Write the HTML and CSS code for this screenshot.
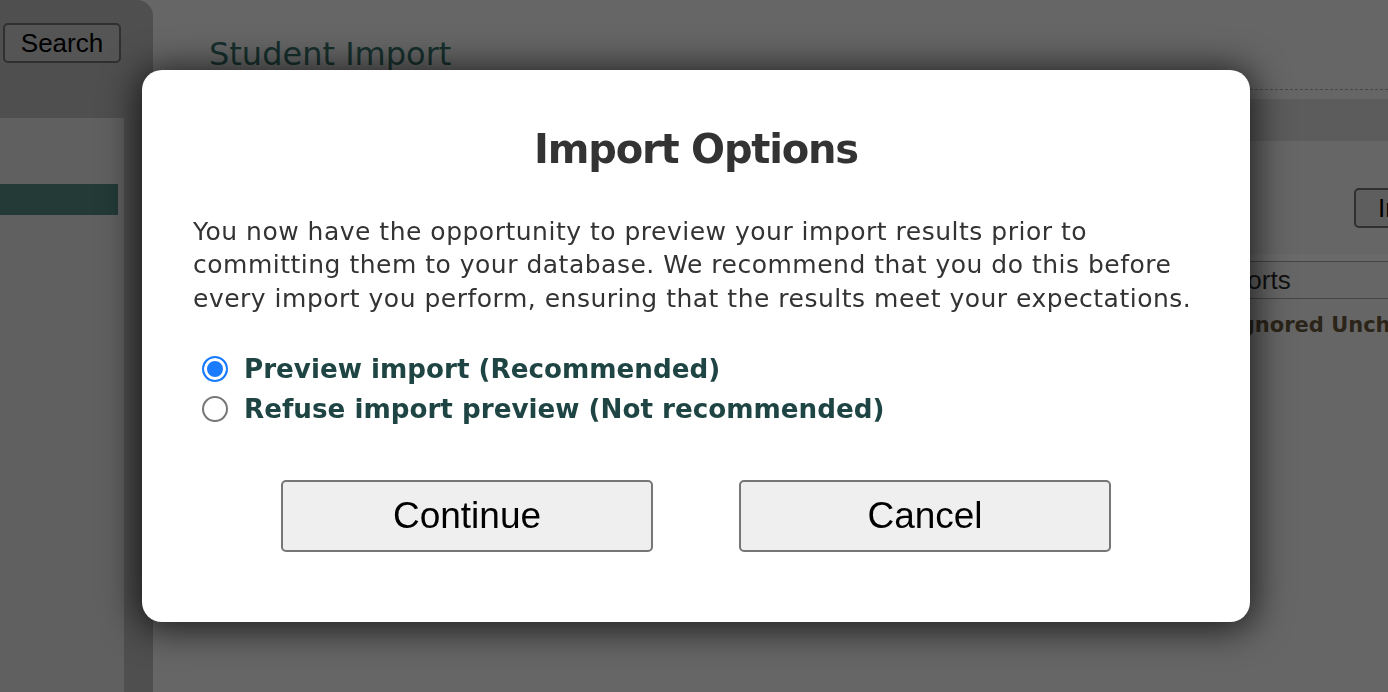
FILE: index.html
```html
<!DOCTYPE html>
<html lang="en">
<head>
<meta charset="utf-8">
<title>Student Import</title>
<link rel="stylesheet" href="styles.css">
</head>
<body>
<div class="page">
  <aside class="sidebar">
    <div class="sidebar-top">
      <button class="search-btn" type="button">Search</button>
    </div>
    <div class="sidebar-panel">
      <div class="nav-item active"></div>
    </div>
  </aside>
  <main class="main">
    <h1 class="page-title">Student Import</h1>
    <div class="toolbar-band"></div>
    <div class="actions">
      <button class="import-btn" type="button">Import</button>
    </div>
    <div class="results">
      <div class="results-row head">
        <span class="cell first"></span>
        <span class="cell second">Imports</span>
      </div>
      <div class="results-row">
        <span class="cell first"></span>
        <span class="cell second status">Ignored Unchanged</span>
      </div>
    </div>
  </main>
</div>

<div class="overlay">
  <div class="modal" role="dialog" aria-labelledby="modal-title">
    <h2 class="modal-title" id="modal-title">Import Options</h2>
    <p class="modal-text">You now have the opportunity to preview your import results prior to committing them to your database. We recommend that you do this before every import you perform, ensuring that the results meet your expectations.</p>
    <div class="options">
      <label class="option">
        <input type="radio" name="preview" class="radio" checked>
        <span>Preview import (Recommended)</span>
      </label>
      <label class="option">
        <input type="radio" name="preview" class="radio">
        <span>Refuse import preview (Not recommended)</span>
      </label>
    </div>
    <div class="modal-buttons">
      <button class="modal-btn" type="button">Continue</button>
      <button class="modal-btn" type="button">Cancel</button>
    </div>
  </div>
</div>
</body>
</html>
```

FILE: styles.css
```css
html, body {
  margin: 0;
  padding: 0;
  height: 100%;
  overflow: hidden;
}

body {
  background: #666666;
  font-family: "DejaVu Sans", Verdana, sans-serif;
}

.page {
  display: flex;
  height: 100vh;
}

/* ---------- sidebar ---------- */
.sidebar {
  flex: 0 0 153px;
  display: flex;
  flex-direction: column;
  background: #4f4f4f;
  border-top-right-radius: 16px;
}

.sidebar-top {
  height: 118px;
  box-sizing: border-box;
  padding: 23px 0 0 3px;
}

.search-btn {
  width: 118px;
  height: 40px;
  box-sizing: border-box;
  background: #555555;
  border: 2px solid #303030;
  border-radius: 5px;
  font-family: "Liberation Sans", Arial, sans-serif;
  font-size: 26px;
  color: #000;
  padding: 0;
}

.sidebar-panel {
  flex: 1;
  width: 124px;
  background: #606060;
  padding-top: 66px;
}

.nav-item {
  height: 31px;
  width: 118px;
}

.nav-item.active {
  background: #233a37;
}

/* ---------- main ---------- */
.main {
  flex: 1;
  min-width: 0;
  padding-left: 56px;
}

.page-title {
  margin: 35px 0 0;
  padding-bottom: 16px;
  border-bottom: 1px dashed #474747;
  font-size: 32px;
  line-height: 38px;
  font-weight: normal;
  color: #16302d;
}

.toolbar-band {
  margin-top: 9px;
  height: 42px;
  background: #5c5c5c;
}

.actions {
  margin-top: 47px;
  padding-left: 1145px;
  white-space: nowrap;
}

.import-btn {
  height: 40px;
  box-sizing: border-box;
  padding: 0 22px;
  background: #5e5e5e;
  border: 2px solid #303030;
  border-radius: 5px;
  font-family: "Liberation Sans", Arial, sans-serif;
  font-size: 26px;
  color: #000;
}

.results {
  margin-top: 26px;
  border-top: 7px solid #6a6a6a;
}

.results-row {
  display: grid;
  grid-template-columns: 992px 1fr;
  height: 36px;
  border-top: 1px solid #454545;
  white-space: nowrap;
  align-items: center;
}

.results-row.head {
  border-bottom: 1px solid #454545;
}

.cell.second {
  font-family: "Liberation Sans", Arial, sans-serif;
  font-size: 26px;
  color: #111;
  padding-left: 3px;
}

.results-row + .results-row {
  border-top: 0;
  height: 52px;
}

.cell.status {
  font-family: "DejaVu Sans", Verdana, sans-serif;
  font-weight: bold;
  font-size: 21px;
  color: #2b2418;
  padding-left: 31px;
}

/* ---------- modal ---------- */
.overlay {
  position: fixed;
  inset: 0;
  display: flex;
  align-items: center;
  justify-content: center;
  padding-left: 4px;
}

.modal {
  width: 1108px;
  box-sizing: border-box;
  padding: 56px 51px 70px;
  background: #ffffff;
  border-radius: 20px;
  box-shadow: 0 3px 36px 4px rgba(0, 0, 0, 0.72);
  color: #333333;
}

.modal-title {
  margin: 0;
  text-align: center;
  font-size: 40px;
  line-height: 46px;
  letter-spacing: -1.2px;
  font-weight: bold;
  color: #333333;
}

.modal-text {
  margin: 43px 0 0;
  font-size: 25px;
  line-height: 33.5px;
  letter-spacing: 0.5px;
  color: #333333;
}

.options {
  margin-top: 34px;
  display: flex;
  flex-direction: column;
}

.option {
  display: flex;
  align-items: center;
  height: 40px;
  font-size: 26.2px;
  font-weight: bold;
  color: #1e4543;
}

.radio {
  appearance: none;
  -webkit-appearance: none;
  width: 26px;
  height: 26px;
  margin: 0 16px 0 9px;
  box-sizing: border-box;
  border-radius: 50%;
  border: 2px solid #767676;
  background: #fff;
}

.radio:checked {
  border-color: #1a7bff;
  background: #1a7bff;
  box-shadow: inset 0 0 0 3px #fff;
}

.modal-buttons {
  margin-top: 51px;
  display: flex;
  justify-content: center;
  gap: 86px;
}

.modal-btn {
  width: 372px;
  height: 72px;
  box-sizing: border-box;
  background: #efefef;
  border: 2px solid #767676;
  border-radius: 5px;
  font-family: "Liberation Sans", Arial, sans-serif;
  font-size: 37px;
  color: #000;
  padding: 0;
}
```
